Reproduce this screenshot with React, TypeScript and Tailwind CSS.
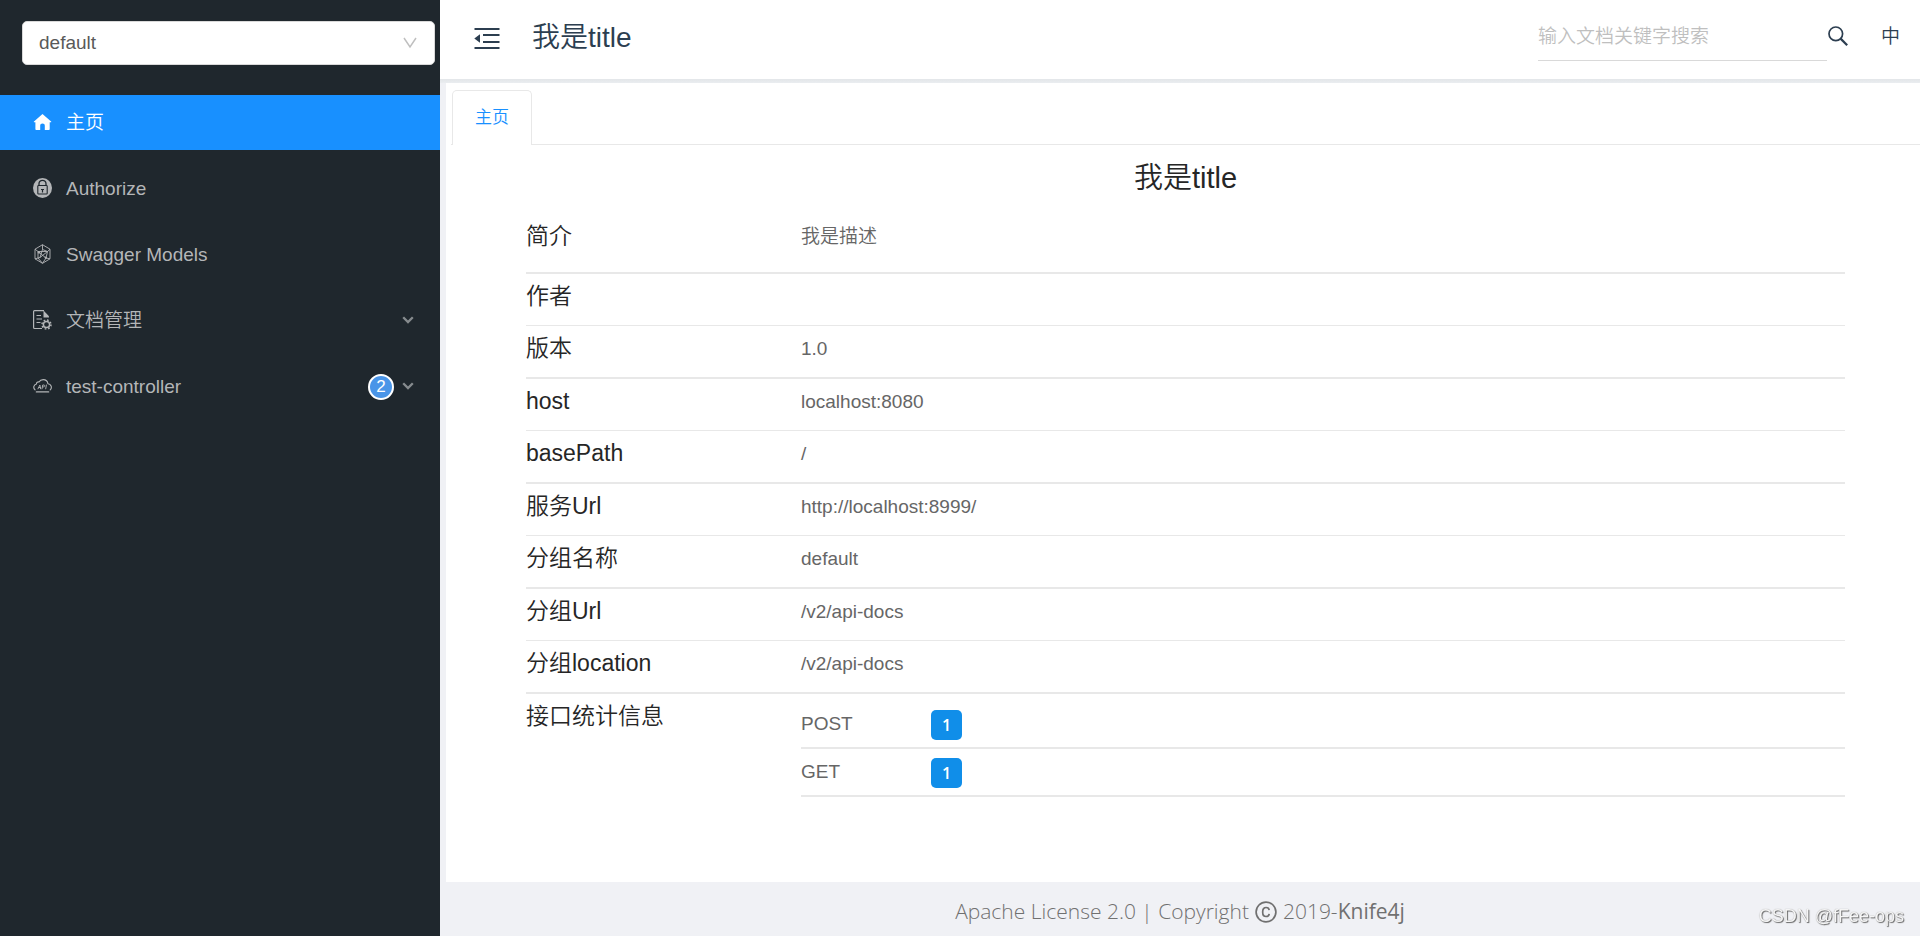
import type { ReactNode } from 'react';

interface MenuItem {
  label: string;
  icon: ReactNode;
  active?: boolean;
  expandable?: boolean;
  count?: number;
}

interface InfoRow {
  label: string;
  value: string;
}

function HomeIcon() {
  return (
    <svg width="19" height="19" viewBox="0 0 19 19" fill="currentColor" aria-hidden="true">
      <path d="M9.5 1 1 8.4c-.4.4-.2.9.3.9h1.100v6.900c0 .5.4.8.8.8h4v-4.300c0-1.200.9-2.100 2.300-2.100s2.300.9 2.300 2.100V17h4.100c.5 0 .8-.3.8-.8V9.300h1.100c.5 0 .7-.5.3-.9L9.500 1Z" />
    </svg>
  );
}

function AuthorizeIcon() {
  return (
    <svg width="19" height="20" viewBox="0 0 19 20" fill="none" aria-hidden="true">
      <ellipse cx="9.500" cy="10" rx="9.500" ry="10" fill="currentColor" />
      <path d="M6 7.500V5.800a3.500 3.500 0 0 1 7 0v1.700" stroke="#1f272d" strokeWidth="1.300" />
      <rect x="4.800" y="7.500" width="9.400" height="8.500" rx=".8" stroke="#1f272d" strokeWidth="1.100" />
      <path d="M9.500 11v3.500M8 11.500h3" stroke="#1f272d" strokeWidth="1.200" />
    </svg>
  );
}

function ModelsIcon() {
  return (
    <svg width="19" height="20" viewBox="0 0 19 20" fill="none" stroke="currentColor" strokeWidth=".9" aria-hidden="true">
      <path d="M9.500.700 17 5.200v9.600l-7.500 4.500L2 14.800V5.200L9.500.700Z" />
      <path d="M9.500.700v4.800M2 5.200l3 2.300h9.500L17 5.200M9.500 5.500 7 13.500l-5 1.300M9.500 5.500l5 2L13 14l4 .8M5 7.500v6.500l4.500 5.300L13 14M14.500 7.500 7 13.500M5 7.500l8 6.500" />
      <circle cx="6" cy="8.500" r=".8" fill="currentColor" />
      <circle cx="12.800" cy="13.700" r=".8" fill="currentColor" />
    </svg>
  );
}

function DocIcon() {
  return (
    <svg width="19" height="20" viewBox="0 0 19 20" fill="none" stroke="currentColor" aria-hidden="true">
      <path d="M9 18.500H1.500a.9.9 0 0 1-.9-.9V1.500c0-.5.4-.9.900-.9h9.500" strokeWidth="1.200" />
      <path d="M10.500.5 16 6.300v1.200h-5.500V.5Z" fill="currentColor" stroke="none" />
      <path d="M3.500 5.500h4.500M3.500 9h5.500M3.500 12.500h4" strokeWidth="1.100" />
      <circle cx="13.500" cy="14.500" r="3.100" strokeWidth="1.500" />
      <circle cx="13.500" cy="14.500" r="4.500" strokeWidth="1.500" strokeDasharray="1.700 1.834" />
    </svg>
  );
}

function ApiIcon() {
  return (
    <svg width="19" height="14" viewBox="0 0 19 14" fill="none" stroke="currentColor" strokeWidth="1.100" strokeLinecap="round" strokeLinejoin="round" aria-hidden="true">
      <path d="M2 10.800A3.300 3.300 0 0 1 3.500 5C3.300 3.500 4.800 2.500 6 3 7.200.800 9 .600 10.200.600c2.500 0 4.400 1.700 4.700 4.100a3.600 3.600 0 0 1 2.300 6.200" />
      <path d="M3.300 12.900h12.400" />
      <path d="m5 9.800 1.900-3.800.7 3.800M5.900 8.500h1.500M9 9.800 9.700 6h1.200c1.200 0 1 1.900-.2 1.900H9.500M12.700 9.800l.7-3.800" strokeWidth=".9" />
    </svg>
  );
}

function ArrowIcon() {
  return (
    <svg width="12" height="8" viewBox="0 0 12 8" fill="none" stroke="currentColor" strokeWidth="2.300" aria-hidden="true">
      <path d="m1.200 1.200 4.800 4.800 4.800-4.800" />
    </svg>
  );
}

function FoldIcon() {
  return (
    <svg width="26" height="22" viewBox="0 0 26 22" fill="currentColor" aria-hidden="true">
      <path d="M.5 0h25v2H.5zM9 6h16.500v2H9zM9 13h16.500v2H9zM.5 19h25v2H.5zM.3 10.500 6 6.200v8.600L.3 10.500Z" />
    </svg>
  );
}

function SearchIcon() {
  return (
    <svg width="20" height="20" viewBox="0 0 20 20" fill="none" stroke="currentColor" strokeWidth="1.700" aria-hidden="true">
      <circle cx="7.800" cy="7.800" r="6.800" />
      <path d="m12.600 12.600 6.600 6.600" strokeWidth="2.200" />
    </svg>
  );
}

function CopyrightIcon() {
  return (
    <svg width="22" height="22" viewBox="0 0 22 22" fill="none" stroke="currentColor" strokeWidth="1.700" aria-hidden="true">
      <circle cx="11" cy="11" r="9.900" />
      <path d="M14.200 9.200c-.2-1.700-1.400-2.700-3.100-2.700-2.200 0-3.400 1.600-3.400 4.100v.9c0 2.500 1.200 4 3.400 4 1.700 0 2.900-1 3.100-2.600" />
    </svg>
  );
}

const menuItems: MenuItem[] = [
  { label: '主页', icon: <HomeIcon />, active: true },
  { label: 'Authorize', icon: <AuthorizeIcon /> },
  { label: 'Swagger Models', icon: <ModelsIcon /> },
  { label: '文档管理', icon: <DocIcon />, expandable: true },
  { label: 'test-controller', icon: <ApiIcon />, expandable: true, count: 2 },
];

const infoRows: InfoRow[] = [
  { label: '作者', value: '' },
  { label: '版本', value: '1.0' },
  { label: 'host', value: 'localhost:8080' },
  { label: 'basePath', value: '/' },
  { label: '服务Url', value: 'http://localhost:8999/' },
  { label: '分组名称', value: 'default' },
  { label: '分组Url', value: '/v2/api-docs' },
  { label: '分组location', value: '/v2/api-docs' },
];

const methodCounts = [
  { method: 'POST', count: 1 },
  { method: 'GET', count: 1 },
];

function Sidebar() {
  return (
    <aside className="w-[440px] shrink-0 bg-[#1f272d]">
      <div className="grid pt-[21px] pr-[5px] pl-[22px]">
        <select
          aria-label="分组"
          className="col-start-1 row-start-1 h-11 w-full appearance-none rounded-[5px] border border-[#d9d9d9] bg-white pl-4 text-[19px] text-[#595959]"
        >
          <option>default</option>
        </select>
        <svg
          className="pointer-events-none col-start-1 row-start-1 mr-[18px] self-center justify-self-end text-[#bfbfbf]"
          width="14"
          height="12"
          viewBox="0 0 14 12"
          fill="none"
          stroke="currentColor"
          strokeWidth="1.500"
          aria-hidden="true"
        >
          <path d="m1 1 6 9 6-9" />
        </svg>
      </div>

      <nav className="mt-[30px] flex flex-col gap-[11px]">
        {menuItems.map((item) => (
          <a
            key={item.label}
            href="#"
            className={`flex h-[55px] items-center pr-[26px] pl-[33px] text-[19px] font-[350] ${
              item.active ? 'bg-[#1890ff] text-white' : 'text-[#b4b6b8]'
            }`}
          >
            <span className="flex w-[33px] shrink-0 pb-px">{item.icon}</span>
            <span className="flex-1 pt-0.5">{item.label}</span>
            {item.count && (
              <span className="mr-2 flex size-[26px] items-center justify-center rounded-full border-2 border-white bg-[#4a95e8] text-[17px] text-white">
                {item.count}
              </span>
            )}
            {item.expandable && (
              <span className="pb-px text-[#868b8e]">
                <ArrowIcon />
              </span>
            )}
          </a>
        ))}
      </nav>
    </aside>
  );
}

function Header() {
  return (
    <header className="flex h-[79px] items-center bg-white pr-5 pb-1 pl-[34px] text-[#2c3e50]">
      <button type="button" aria-label="收起菜单" className="pt-0.5">
        <FoldIcon />
      </button>
      <span className="ml-8 flex-1 text-[28px] font-[350]">我是title</span>
      <input
        type="search"
        aria-label="搜索"
        placeholder="输入文档关键字搜索"
        className="h-[47px] w-[289px] border-b border-[#d9d9d9] text-[19px] font-[350] outline-none placeholder:text-[#bfbfbf]"
      />
      <button type="button" aria-label="搜索文档" className="ml-px pb-1">
        <SearchIcon />
      </button>
      <button type="button" className="ml-[33px] text-[19px] font-[350]">
        中
      </button>
    </header>
  );
}

function ApiInfo() {
  return (
    <section className="px-[75px]">
      <h1 className="pt-2 text-center text-[29px] leading-[50px] font-[350] text-[#262626]">我是title</h1>
      <dl className="font-[350]">
        <div className="flex h-[71px] border-b-2 border-[#e8e8e8] pt-[13px]">
          <dt className="w-[275px] text-[23px] leading-[40px] text-[#262626]">简介</dt>
          <dd className="flex-1 text-[19px] leading-[42px] text-[#666]">我是描述</dd>
        </div>
        {infoRows.map((row) => (
          <div key={row.label} className="flex border-b border-[#e8e8e8] pt-0.5 pb-[7px] odd:border-b-2">
            <dt className="w-[275px] text-[23px] leading-[40px] text-[#262626]">{row.label}</dt>
            <dd className="min-h-[42px] flex-1 text-[19px] leading-[42px] text-[#666]">{row.value}</dd>
          </div>
        ))}
        <div className="flex pt-0.5">
          <dt className="w-[275px] text-[23px] leading-[40px] text-[#262626]">接口统计信息</dt>
          <dd className="flex-1 pt-[5px]">
            <ul>
              {methodCounts.map((item) => (
                <li key={item.method} className="flex h-12 items-center border-b-2 border-[#e8e8e8] text-[19px] text-[#666]">
                  <span className="w-[130px]">{item.method}</span>
                  <span className="mt-0.5 flex h-[30px] w-[31px] items-center justify-center rounded-[5px] bg-[#108ee9] font-['Open_Sans',sans-serif] text-[16px] font-semibold text-white">
                    {item.count}
                  </span>
                </li>
              ))}
            </ul>
          </dd>
        </div>
      </dl>
    </section>
  );
}

export default function App() {
  return (
    <div className="flex min-h-screen bg-[#f0f1f5] font-['Liberation_Sans','Noto_Sans_CJK_SC',sans-serif]">
      <Sidebar />
      <div className="flex min-w-0 flex-1 flex-col">
        <Header />
        <div className="h-1 bg-linear-to-b from-[#e3e6e9] to-[#eaedf0]" />
        <main className="ml-[6px] flex-1 bg-white pt-[7px] pl-[5px]">
          <div role="tablist" className="flex border-b border-[#e8e8e8] pl-px">
            <button
              type="button"
              role="tab"
              aria-selected="true"
              className="-mb-px h-[55px] w-20 rounded-t-[5px] border border-b-0 border-[#e8e8e8] bg-white text-[17px] font-[350] text-[#1890ff]"
            >
              主页
            </button>
          </div>
          <ApiInfo />
        </main>
        <footer className="flex h-[54px] items-center justify-center pt-[6px] font-['Open_Sans',sans-serif] text-[21px] font-light text-[#707070]">
          <span>Apache License 2.0 | Copyright</span>
          <span className="mx-[6px]">
            <CopyrightIcon />
          </span>
          <span>2019-</span>
          <a href="#" className="font-normal">
            Knife4j
          </a>
        </footer>
      </div>
      <div className="fixed right-4 bottom-1 text-[18px] leading-8 text-[#f5f5f5] [text-shadow:1px_1px_1px_#666,0_0_1px_#999]">
        CSDN @fFee-ops
      </div>
    </div>
  );
}
